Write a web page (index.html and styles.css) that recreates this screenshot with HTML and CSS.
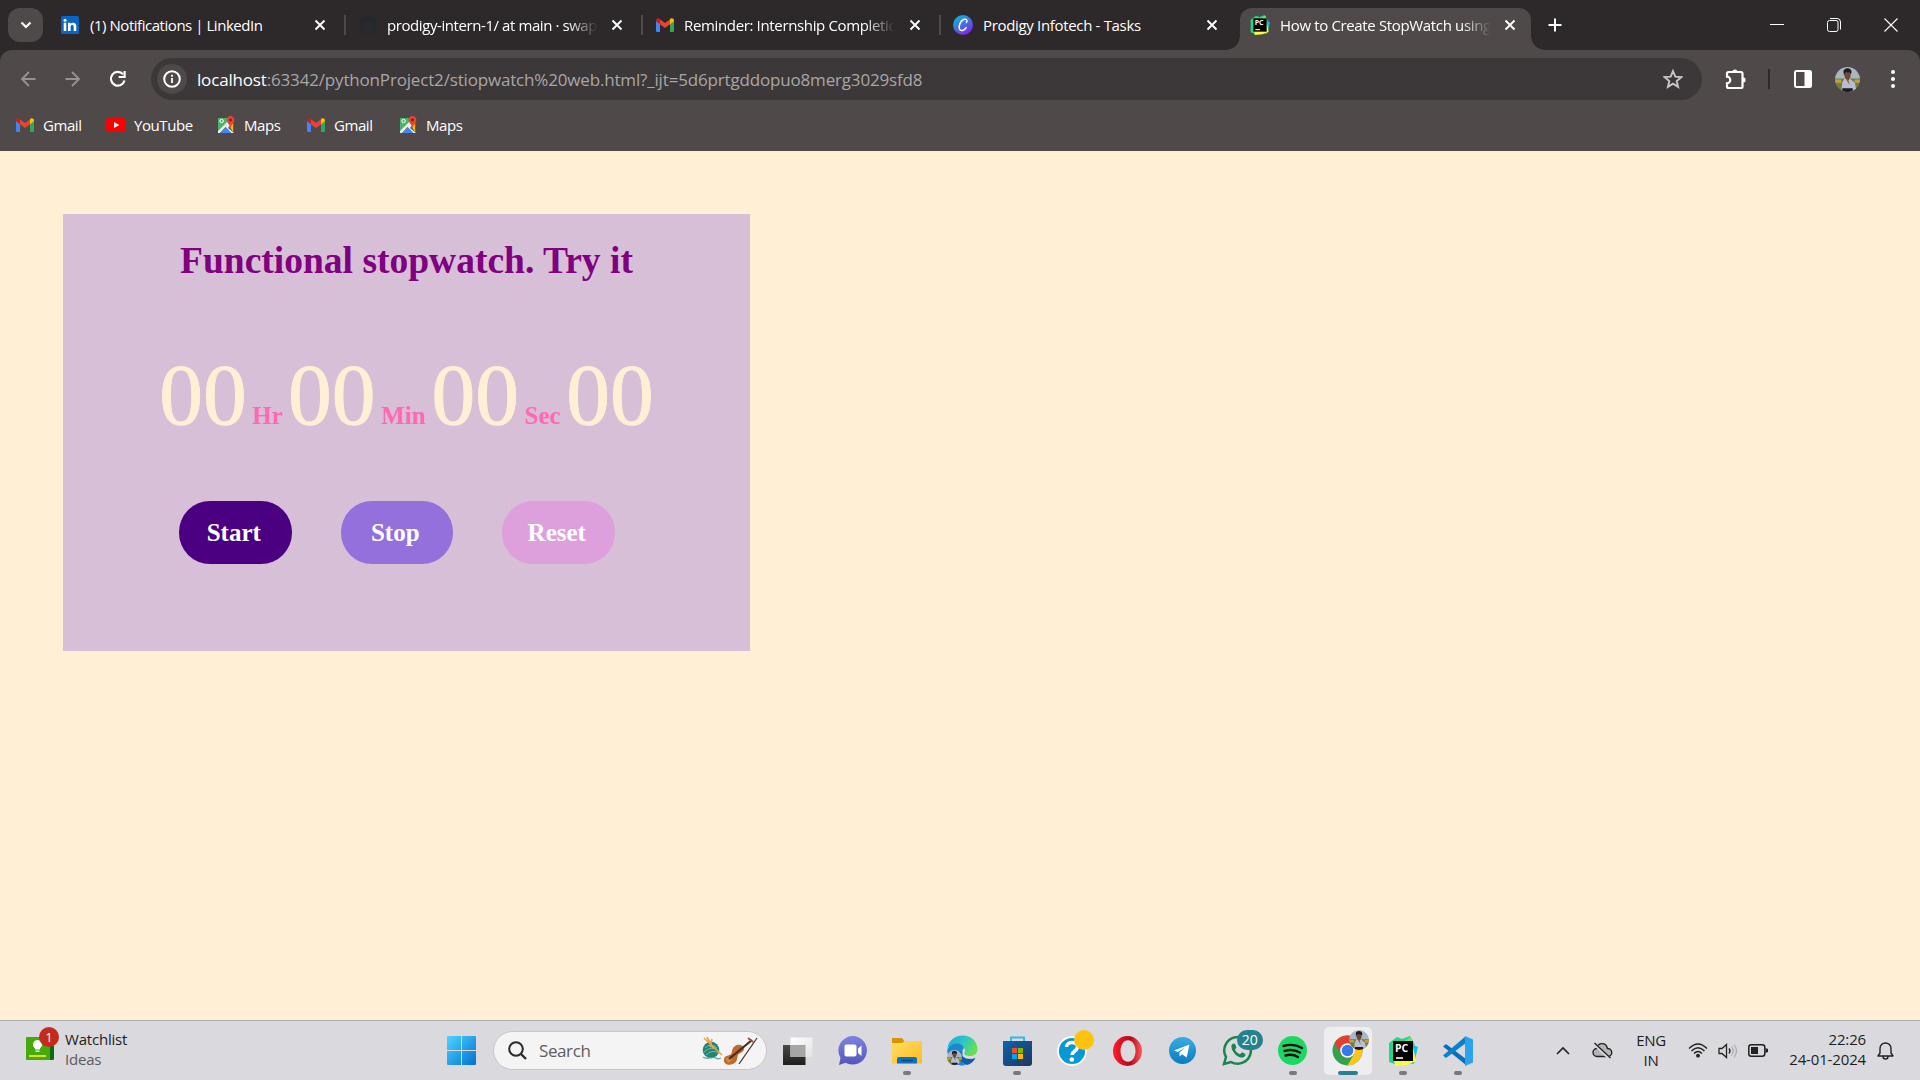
FILE: index.html
```
<!DOCTYPE html>
<html lang="en">
<head>
<meta charset="utf-8">
<title>Stopwatch</title>
<link rel="stylesheet" href="styles.css">
</head>
<body>
<svg width="0" height="0" class="defs" aria-hidden="true">
  <defs>
    <linearGradient id="win" x1="0" y1="0" x2="1" y2="1"><stop offset="0" stop-color="#4fd4ff"/><stop offset="1" stop-color="#0270d1"/></linearGradient>
    <linearGradient id="canva" x1="0" y1="0" x2=".6" y2="1"><stop offset="0" stop-color="#00c4cc"/><stop offset=".5" stop-color="#3a7be0"/><stop offset="1" stop-color="#7d2ae8"/></linearGradient>
    <linearGradient id="tg" x1="0" y1="0" x2="0" y2="1"><stop offset="0" stop-color="#37aee2"/><stop offset="1" stop-color="#0a7cc0"/></linearGradient>
    <linearGradient id="chat" x1="0" y1="0" x2="0" y2="1"><stop offset="0" stop-color="#7b83e0"/><stop offset="1" stop-color="#5555bd"/></linearGradient>
    <linearGradient id="fold" x1="0" y1="0" x2="1" y2="1"><stop offset="0" stop-color="#ffdc63"/><stop offset="1" stop-color="#fbbd22"/></linearGradient>
    <linearGradient id="store" x1="0" y1="0" x2="1" y2="1"><stop offset="0" stop-color="#0d63ad"/><stop offset="1" stop-color="#21365c"/></linearGradient>
    <linearGradient id="edgeA" x1="0" y1="0" x2="1" y2=".5"><stop offset="0" stop-color="#1aa5df"/><stop offset=".55" stop-color="#2cc7c5"/><stop offset="1" stop-color="#65e04e"/></linearGradient>
    <linearGradient id="opera" x1="0" y1="0" x2="1" y2="0"><stop offset="0" stop-color="#ff1b2d"/><stop offset=".6" stop-color="#b5071a"/><stop offset="1" stop-color="#ff5a55"/></linearGradient>
    <linearGradient id="tv" x1="0" y1="0" x2="1" y2="1"><stop offset="0" stop-color="#ffffff"/><stop offset="1" stop-color="#e2e2e2"/></linearGradient>
    <linearGradient id="tvb" x1="0" y1="0" x2="0" y2="1"><stop offset="0" stop-color="#4a4a48"/><stop offset="1" stop-color="#1d1d1d"/></linearGradient>
    <symbol id="gmail" viewBox="0 0 18 14" preserveAspectRatio="none"><path fill="#4285f4" d="M0 3v9.700A1.300 1.300 0 0 0 1.300 14H4V5z"/><path fill="#34a853" d="M14 14h2.700a1.300 1.300 0 0 0 1.300-1.300V3l-4 2z"/><path fill="#ea4335" d="M3.500.900 9 5l5.500-4.100V5.900L9 10 3.500 5.900z"/><path fill="#c5221f" d="M0 2.200C0 .4 2-.3 3.300.6L4 1.200V6.200L0 3.300z"/><path fill="#fbbc04" d="M18 2.200C18 .4 16-.3 14.700.6l-.7.600v5l4-2.900z"/></symbol>
    <symbol id="maps" viewBox="0 0 18 18"><path fill="#34a853" d="M1 2h12l-5 7-7 7z"/><path fill="#fff" d="M1 2h16v14H1z" opacity=".12"/><path fill="#fbbc04" d="m11 7 5 1v8z"/><path fill="#eceff1" d="M1 17V15L12 4l2 4-3 4 6 5h-3L8.500 11 3 17z"/><path fill="#4285f4" d="m3 17 6-5.500L14.500 17z"/><circle cx="4.600" cy="5" r="1.700" fill="none" stroke="#fff"/><path fill="#ea4335" d="M13.500 0a3.900 3.900 0 0 1 3.900 4c0 3-3.200 4-3.900 8-.7-4-3.900-5-3.900-8a3.900 3.900 0 0 1 3.900-4z"/><circle cx="13.500" cy="4" r="1.400" fill="#801e16"/></symbol>
    <symbol id="close" viewBox="0 0 12 12"><path d="m1.500 1.500 9 9m0-9-9 9" fill="none" stroke="#fff" stroke-width="1.900"/></symbol>
    <symbol id="pycharm" viewBox="0 0 30 30"><path fill="#21d789" d="m1 7 8-6 5 2 8-3 4 7 3 8-3 13-9-1-8 2-8-3z"/><path fill="#07c3f2" d="m22 8 8 3-3 9-6-3z"/><path fill="#fcf84a" d="m6 23 19-12 3 14-9 4-12 1z"/><path fill="#7be35f" d="m17 5 6-4 3 8z"/><path d="M5 5h20v20H5z"/><path stroke="#fff" stroke-width="1.600" d="M8 22h7"/><text x="7" y="15.500" font-family="Open Sans,sans-serif" font-weight="700" font-size="10.500" fill="#fff">PC</text></symbol>
    <symbol id="photo" viewBox="0 0 24 24"><clipPath id="pc"><circle cx="12" cy="12" r="12"/></clipPath><g clip-path="url(#pc)"><path fill="#a9b7c4" d="M0 0h24v12H0z"/><path fill="#787c3f" d="M0 11h24v13H0z"/><path fill="#b7a33f" d="M0 12h6v3H0zM19 12h5v3h-5z"/><path fill="#b9bdd2" d="M9 11h5l5 4 2 9H6l1-9z"/><path fill="#6b4939" d="M9 3h6v6l-2 4-3-2-1.500-4z"/><path fill="#1d1b20" d="M8 5c0-5 8-5 8 0l-1 2-1-2h-4L9 7zM7 20.500h10V24H7z"/><path fill="#80533c" d="m10 11 3 2 1 4z"/></g></symbol>
  </defs>
</svg>

<header class="browser">
  <div class="tabs">
    <div class="tab-search"><svg width="12" height="8" viewBox="0 0 12 8"><path d="m1.500 1.500 4.500 4.500 4.500-4.500" fill="none" stroke="#fff" stroke-width="2.200"/></svg></div>
    <div class="tab tab-1">
      <svg class="fav" width="18" height="18" viewBox="0 0 18 18"><rect width="18" height="18" rx="1.500" fill="#0a66c2"/><path fill="#fff" d="M2.700 6.800h2.600V15H2.700zM7 6.800h2.500V8c1-2 5.800-2.100 5.800 2V15h-2.600v-4.300c0-2.400-3.100-2.200-3.100 0V15H7z"/><circle cx="4" cy="4.200" r="1.500" fill="#fff"/></svg>
      <span class="tab-title t1">(1) Notifications | LinkedIn</span><svg class="x" width="12" height="12"><use href="#close"/></svg>
    </div>
    <div class="tab tab-2">
      <svg class="fav" width="20" height="20" viewBox="0 0 20 20"><circle cx="10" cy="10" r="9.500" fill="#24292f"/><path fill="#2d2829" d="M5 5.500 7.500 6.500h5L15 5.500c1.500 3 1 7-3 8v4.500H8V13.500c-4-1-4.500-5-3-8z"/></svg>
      <span class="tab-title t2 fade">prodigy-intern-1/ at main · swap</span><svg class="x" width="12" height="12"><use href="#close"/></svg>
    </div>
    <div class="tab tab-3">
      <svg class="fav" width="18" height="14"><use href="#gmail"/></svg>
      <span class="tab-title t3 fade">Reminder: Internship Completio</span><svg class="x" width="12" height="12"><use href="#close"/></svg>
    </div>
    <div class="tab tab-4">
      <svg class="fav" width="20" height="20" viewBox="0 0 20 20"><circle cx="10" cy="10" r="10" fill="url(#canva)"/><path d="M13.400 7.500c1.700-2.500-.3-4-2.800-3C7 6 5.500 11.500 6.500 14c1.200 2.600 5 1.600 6.700-1.400" fill="none" stroke="#fff" stroke-width="1.500" stroke-linecap="round"/></svg>
      <span class="tab-title t4">Prodigy Infotech - Tasks</span><svg class="x" width="12" height="12"><use href="#close"/></svg>
    </div>
    <div class="tab tab-5 active">
      <svg class="fav" width="20" height="20"><use href="#pycharm"/></svg>
      <span class="tab-title t5 fade">How to Create StopWatch using</span><svg class="x" width="12" height="12"><use href="#close"/></svg>
    </div>
    <svg class="plus" width="14" height="14" viewBox="0 0 14 14"><path d="M7 .5v13M.5 7h13" stroke="#fff" stroke-width="2"/></svg>
    <div class="window-controls">
      <svg width="14" height="14" viewBox="0 0 14 14"><path d="M0 6.500h14" stroke="#fff"/></svg>
      <svg width="14" height="14" viewBox="0 0 14 14"><rect x=".5" y="2.500" width="10.500" height="11" rx="2" fill="none" stroke="#fff"/><path d="M3 .5h7a3.500 3.500 0 0 1 3.500 3.500v7.500" fill="none" stroke="#fff"/></svg>
      <svg width="14" height="14" viewBox="0 0 14 14"><path d="m.5.500 13 13m0-13-13 13" stroke="#fff" stroke-width="1.100"/></svg>
    </div>
  </div>

  <div class="toolbar">
    <svg class="nav-back" width="16" height="16" viewBox="0 0 16 16"><path d="M15.500 8H2m7-7L2 8l7 7" fill="none" stroke="#969292" stroke-width="1.900"/></svg>
    <svg class="nav-fwd" width="16" height="16" viewBox="0 0 16 16"><path d="M.5 8H14M7 1l7 7-7 7" fill="none" stroke="#969292" stroke-width="1.900"/></svg>
    <svg class="reload" width="18" height="18" viewBox="0 0 18 18"><path d="M14 4.200A6.900 6.900 0 1 0 15.500 10.500" fill="none" stroke="#fff" stroke-width="2.200"/><path d="M15.600 1v6h-6" fill="none" stroke="#fff" stroke-width="2.200"/></svg>
    <div class="omnibox">
      <div class="site-info"><svg width="18" height="18" viewBox="0 0 18 18"><circle cx="9" cy="9" r="7.800" fill="none" stroke="#fff" stroke-width="2"/><path d="M9 8v5M9 4.800v2" stroke="#fff" stroke-width="1.800"/></svg></div>
      <span class="url"><b>localhost</b>:63342/pythonProject2/stiopwatch%20web.html?_ijt=5d6prtgddopuo8merg3029sfd8</span>
      <svg class="star" width="20" height="20" viewBox="0 0 20 20"><path d="m10 2 2.300 5.600 6 .5-4.600 3.900 1.400 5.900-5.100-3.200-5.100 3.200L6.300 12 1.700 8.100l6-.5z" fill="none" stroke="#c7c5c5" stroke-width="1.900"/></svg>
    </div>
    <svg class="ext" width="22" height="22" viewBox="0 0 22 22"><path d="M2 5.500q0-1.500 1.500-1.500H16q1.500 0 1.500 1.500V18.500q0 1.500-1.500 1.500H3.500Q2 20 2 18.500V15.300a3.300 3.300 0 0 0 0-6.600z" fill="none" stroke="#fff" stroke-width="2.200"/><path d="M7.300 4a2.600 2.600 0 0 1 5.200 0zM18 9.300a2.600 2.600 0 0 1 0 5.200z" fill="#fff"/></svg>
    <span class="divider"></span>
    <svg class="panel" width="18" height="18" viewBox="0 0 18 18"><rect x="1" y="1" width="16" height="16" rx="1.500" fill="none" stroke="#fff" stroke-width="2"/><path d="M10.500 1H17v16h-6.500z" fill="#fff"/></svg>
    <svg class="avatar" width="25" height="25"><use href="#photo"/></svg>
    <svg class="dots" width="4" height="18" viewBox="0 0 4 18"><g fill="#fff"><circle cx="2" cy="2" r="2"/><circle cx="2" cy="9" r="2"/><circle cx="2" cy="16" r="2"/></g></svg>
  </div>

  <div class="bookmarks">
    <div class="bm bm-1"><svg width="18" height="14"><use href="#gmail"/></svg><span>Gmail</span></div>
    <div class="bm bm-2"><svg width="20" height="14" viewBox="0 0 20 14"><rect width="20" height="14" rx="3.500" fill="#f00"/><path fill="#fff" d="m8 4 5.300 3L8 10z"/></svg><span>YouTube</span></div>
    <div class="bm bm-3"><svg width="18" height="18"><use href="#maps"/></svg><span>Maps</span></div>
    <div class="bm bm-4"><svg width="18" height="14"><use href="#gmail"/></svg><span>Gmail</span></div>
    <div class="bm bm-5"><svg width="18" height="18"><use href="#maps"/></svg><span>Maps</span></div>
  </div>
</header>

<main class="page">
  <section class="card">
    <h1 class="title">Functional stopwatch. Try it</h1>
    <div class="time"><span class="digit">00</span> <span class="unit">Hr</span> <span class="digit">00</span> <span class="unit">Min</span> <span class="digit">00</span> <span class="unit">Sec</span> <span class="digit">00</span></div>
    <div class="buttons"><button class="btn start">Start</button><button class="btn stop">Stop</button><button class="btn reset">Reset</button></div>
  </section>
</main>

<footer class="taskbar">
  <div class="widget">
    <div class="widget-icon"><svg width="28" height="23" viewBox="0 0 28 23"><rect width="28" height="23" rx="1.500" fill="#0b6a18"/><path fill="#48a90d" d="M1.500 0H24v23H1.500A1.500 1.500 0 0 1 0 21.500v-20A1.500 1.500 0 0 1 1.500 0z"/><path fill="#d5e800" d="M3 18h17v2H3z"/><path fill="#fff" d="M11.500 3a4.500 4.500 0 0 1 2.800 8l-.5 1.500H9.300L8.700 11a4.500 4.500 0 0 1 2.800-8zM9.500 13.500h4v1.300h-4z"/></svg><span class="badge-one">1</span></div>
    <div class="widget-text"><span>Watchlist</span><span class="sub">Ideas</span></div>
  </div>
  <svg class="winlogo" width="29" height="29" viewBox="0 0 29 29"><path fill="url(#win)" d="M1 0h13v14H0V1a1 1 0 0 1 1-1zM15 0h13a1 1 0 0 1 1 1v13H15zM0 15h14v14H1a1 1 0 0 1-1-1zM15 15h14v13a1 1 0 0 1-1 1H15z"/></svg>
  <div class="search">
    <svg width="19" height="19" viewBox="0 0 19 19"><circle cx="8" cy="8" r="6.800" fill="none" stroke="#2a2a2a" stroke-width="2"/><path d="m13 13 5 5" stroke="#2a2a2a" stroke-width="2.400"/></svg>
    <span>Search</span>
    <svg class="doodle" width="56" height="28" viewBox="0 0 56 28"><circle cx="9" cy="13" r="8.300" fill="#278475"/><path stroke="#65bfa9" fill="none" d="M3 11q6-6 12 0M2 15q8-7 14-1M4 18q6-6 12-2"/><path stroke="#4fa491" stroke-width="1.200" fill="none" d="M1 20c2 3 10-1 13 1s3 0 5 0"/><path stroke="#f0a04b" stroke-width="1.700" d="m2 1 18 17M5 0l6 11M10 2 8 10"/><path fill="#bd6a2e" d="M22 22c1-4 5-3 7-5s0-5 4-8 9 0 9 3-5 4-6 6 0 7-5 9c-5 2-10 0-9-5z"/><path fill="#d98a48" d="M24 22c1-2 4-2 5-1l1 2-4 3z"/><path stroke="#4b2b20" stroke-width="2.200" d="M27 22 50 3"/><path stroke="#9c4a35" stroke-width="1.800" d="m46 1 5 4"/><path stroke="#4b3430" stroke-width="1.300" d="M37 27 55 1"/></svg>
  </div>
  <div class="apps">
    <div class="app"><svg width="31" height="30" viewBox="0 0 31 30"><path fill="url(#tvb)" d="M1 9h22.500v20H1z"/><path fill="url(#tv)" d="M8.500 1.500h22V21h-22z"/><path fill="#a6a6a5" d="M8.500 9h15v12h-15z"/></svg></div>
    <div class="app"><svg width="29" height="29" viewBox="0 0 29 29"><path fill="url(#chat)" d="M14.500 0a14.300 14.300 0 1 1-7 26.700L1 29l1.500-7A14.500 14.500 0 0 1 14.500 0z"/><rect x="6.500" y="8.500" width="12" height="12" rx="2" fill="#fff"/><path fill="#fff" d="m20 12.500 3.500-3v10.500l-3.500-3z"/></svg></div>
    <div class="app run"><svg width="30" height="28" viewBox="0 0 30 28"><path fill="#d89405" d="M0 1h10l3 4v5H0z"/><path fill="url(#fold)" d="M0 6h10l3-2h17v22.500H0z"/><path fill="#0b72c3" d="M7 20h16a2 2 0 0 1 2 2v4.500H5V22a2 2 0 0 1 2-2z"/><path stroke="#064b87" stroke-width="1.500" d="M9 23.500h12"/></svg></div>
    <div class="app"><svg width="31" height="31" viewBox="0 0 31 31"><path fill="#1b87cf" d="M.5 15.500A15 15 0 0 0 15.500 30.500V14z"/><path fill="url(#edgeA)" d="M.5 13C3-3 28-4 30.500 13c.5 6-4 8-8 8-5 0-6.500-2.500-4.500-4.500C19 12 10 6 .5 13z"/><path fill="#1c86ce" d="M.5 14C5 7 15 7 17 13c-5 5-5 14 2 17A15 15 0 0 1 .5 14z"/><path fill="#135da8" d="M14 16c-4 5 0 13 6 14 4-1 7-4 8.500-7-8 3-15-1-14.500-7z"/><svg x="0" y="15" width="15" height="15"><use href="#photo"/></svg></svg></div>
    <div class="app run"><svg width="29" height="30" viewBox="0 0 29 30"><path d="M8 6V1.500h13V6" fill="none" stroke="#31b9e9" stroke-width="2"/><path fill="url(#store)" d="M0 5h29v22q0 3-3 3H3q-3 0-3-3z"/><path fill="#f25022" d="M9 12h5v5H9z"/><path fill="#7fba00" d="M15 12h5v5h-5z"/><path fill="#00a4ef" d="M9 18h5v5H9z"/><path fill="#ffb900" d="M15 18h5v5h-5z"/></svg></div>
    <div class="app"><svg width="30" height="30" viewBox="0 0 30 30"><circle cx="15" cy="15" r="14" fill="#0898d8" stroke="#fff" stroke-width="1.800"/><path d="M9.500 11c0-6 11-6 11 0 0 4-5.500 4-5.500 8" fill="none" stroke="#fff" stroke-width="3.500"/><circle cx="14.800" cy="23.500" r="2.300" fill="#fff"/></svg><span class="dot-badge"></span></div>
    <div class="app"><svg width="29" height="30" viewBox="0 0 29 30"><path fill="url(#opera)" fill-rule="evenodd" d="M14.500 0a14.500 15 0 1 1 0 30 14.500 15 0 0 1 0-30zM15 4.200c-4.400 0-7.500 4.800-7.500 10.800s3.100 10.800 7.500 10.800 7.500-4.800 7.500-10.800S19.400 4.200 15 4.200z"/></svg></div>
    <div class="app"><svg width="27" height="27" viewBox="0 0 27 27"><circle cx="13.500" cy="13.500" r="13.500" fill="url(#tg)"/><path fill="#fff" d="m5 13.500 15.500-6-2.800 13-4.700-3.300-2.300 2.300-.3-3.700 6-5.500-7.400 4.700z"/></svg></div>
    <div class="app"><svg width="31" height="31" viewBox="0 0 31 31"><path d="m2 29 2-7A13.300 13.300 0 1 1 9 27z" fill="none" stroke="#1b8550" stroke-width="2.500"/><path fill="#1b8550" d="M11 8.500c-5 3 3 15 9.500 14 3-.5 3.500-3 2.500-3.700l-3-1.500-2 2c-2-.6-4-2.500-5-4.800l1.500-2L13 9z"/></svg><span class="count">20</span></div>
    <div class="app run"><svg width="29" height="29" viewBox="0 0 29 29"><circle cx="14.500" cy="14.500" r="14.500" fill="#1ed760"/><path d="M5.500 10q10-3 18.500 2M6.500 15q8-2.500 15.500 1.500M7.500 19.500q7-2 12.500 1.500" fill="none" stroke="#111" stroke-width="2.400" stroke-linecap="round"/></svg></div>
    <div class="app current"><svg width="31" height="31" viewBox="0 0 31 31"><circle cx="15.500" cy="15.500" r="15" fill="#33a14d"/><path fill="#e43e30" d="M2.500 8A15 15 0 0 1 28.500 8H15.500L9 19z"/><path fill="#fdc51a" d="M28.500 8a15 15 0 0 1-13 22.500L22 19l-2-11z"/><circle cx="15.500" cy="15.500" r="7.300" fill="#fff"/><circle cx="15.500" cy="15.500" r="5.800" fill="#3579ec"/></svg><svg class="mini" width="20" height="20"><use href="#photo"/></svg></div>
    <div class="app run"><svg width="30" height="30"><use href="#pycharm"/></svg></div>
    <div class="app run"><svg width="30" height="30" viewBox="0 0 30 30"><path fill="#0a6fb8" d="M0 10.500 3 8l20 15v6z"/><path fill="#0b80cc" d="m0 19.500 3 2.500L23 7V0z"/><path fill="#2ba2ee" d="M22 0l8 3.500v23L22 30z"/></svg></div>
  </div>
  <div class="tray">
    <svg class="chev" width="14" height="9" viewBox="0 0 14 9"><path d="m1 8 6-6 6 6" fill="none" stroke="#222" stroke-width="1.600"/></svg>
    <svg class="cloud" width="21" height="17" viewBox="0 0 21 17"><path d="M5 14.500a4 4 0 0 1 0-8C6 0 14 0 15.500 6.500a4 4 0 0 1 .5 8z" fill="#b5b5b8" stroke="#222" stroke-width="1.400"/><path d="m3 2.500 14.500 14" stroke="#d9d9de" stroke-width="3.200"/><path d="m2.500 1 16 15" stroke="#222" stroke-width="1.400"/></svg>
    <div class="lang"><span>ENG</span><span>IN</span></div>
    <svg class="wifi" width="20" height="15" viewBox="0 0 20 15"><path d="M1 5.500q9-9 18 0M3.500 8q6.500-6.500 13 0M6 10.500q4-4 8 0" fill="none" stroke="#222" stroke-width="1.400"/><circle cx="10" cy="12.700" r="1.900" fill="#222"/></svg>
    <svg class="vol" width="20" height="16" viewBox="0 0 20 16"><path d="M1 5.500h3l4.500-4v13L4 10.500H1z" fill="none" stroke="#222" stroke-width="1.300"/><path d="M11 5.500q2 2.500 0 5" fill="none" stroke="#222" stroke-width="1.300"/><path d="M13.500 3.500q3.500 4.500 0 9M16 1.500q5 6.500 0 13" fill="none" stroke="#aaa" stroke-width="1.200"/></svg>
    <svg class="bat" width="20" height="13" viewBox="0 0 20 13"><rect x=".8" y=".8" width="16" height="11.400" rx="2.500" fill="none" stroke="#222" stroke-width="1.500"/><path fill="#222" d="M3 3h7v7H3zM17.500 4 20 5v3l-2.500 1z"/></svg>
    <div class="clock"><span>22:26</span><span class="date">24-01-2024</span></div>
    <svg class="bell" width="17" height="18" viewBox="0 0 17 18"><path d="M1 14 3 11V6.500a5.500 5.500 0 0 1 11 0V11l2 3zM6 14.500a2.500 2.500 0 0 0 5 0" fill="none" stroke="#222" stroke-width="1.400" stroke-linejoin="round"/></svg>
  </div>
</footer>
</body>
</html>
```
FILE: styles.css
```
* { box-sizing: border-box; }
html, body { margin: 0; height: 100%; }
body { display: flex; flex-direction: column; width: 1920px; height: 1080px; overflow: hidden; background: #ffefd5; font-family: "Open Sans", "Noto Sans", sans-serif; }
svg { display: block; flex: none; }
.defs { position: absolute; }

/* Browser chrome */
.browser { flex: none; height: 151px; background: #2d2829; color: #fff; }
.tabs { display: flex; align-items: center; height: 50px; }
.tab-search { display: flex; align-items: center; justify-content: center; width: 35px; height: 34px; margin-left: 8px; border-radius: 12px; background: #4f4949; }
.tab { position: relative; display: flex; align-items: center; height: 42px; width: 297.300px; margin-top: 8px; padding-bottom: 8px; }
.tab-1 { padding-left: 18px; width: 301px; }
.tab-2 { padding-left: 14px; width: 297px; }
.tab-3 { padding-left: 15px; width: 298px; }
.tab-4 { padding-left: 14px; width: 301px; }
.tab-5 { padding-left: 10px; width: 291px; }
.tab-2::before, .tab-3::before, .tab-4::before { content: ""; position: absolute; left: 0; top: 7px; width: 2px; height: 20px; background: #4f4949; }
.active { background: #4f4949; border-radius: 12px 12px 0 0; }
.active::before, .active::after { content: ""; position: absolute; bottom: 0; width: 14px; height: 14px; }
.active::before { left: -14px; background: radial-gradient(circle at 0 0, transparent 13.500px, #4f4949 14px); }
.active::after { right: -14px; background: radial-gradient(circle at 100% 0, transparent 13.500px, #4f4949 14px); }
.tab-title { margin-left: 10px; width: 213px; overflow: hidden; white-space: nowrap; font-size: 15px; line-height: 24px; letter-spacing: -.35px; }
.t1 { margin-left: 11px; letter-spacing: -.46px; }
.t2 { margin-left: 9px; letter-spacing: -.42px; }
.t4 { letter-spacing: -.33px; }
.fade { -webkit-mask-image: linear-gradient(90deg, #000 85%, transparent 99%); mask-image: linear-gradient(90deg, #000 85%, transparent 99%); }
.x { margin-left: 11px; }
.tab-3 .x { margin-left: 12px; }
.tab-4 .x { margin-left: 10px; }
.plus { margin-left: 17px; }
.window-controls { display: flex; gap: 43px; margin-left: auto; padding-right: 22px; }
.toolbar { display: flex; align-items: center; height: 58px; padding-left: 20px; border-radius: 12px 12px 0 0; background: #4f4949; }
.nav-fwd { margin-left: 29px; }
.reload { margin-left: 28px; }
.omnibox { display: flex; align-items: center; width: 1551px; height: 42px; margin-left: 24px; padding: 0 19px 0 6px; border-radius: 21px; background: #3c3839; }
.site-info { display: flex; align-items: center; justify-content: center; width: 30px; height: 30px; border-radius: 50%; background: #4f4949; }
.url { margin-left: 10px; white-space: nowrap; color: #a9a6a6; font-size: 17px; letter-spacing: -.17px; }
.url b { color: #fff; font-weight: 400; }
.star { margin-left: auto; }
.ext { margin-left: 23px; }
.divider { width: 1.500px; height: 20px; margin-left: 21px; background: #2d2829; }
.panel { margin-left: 24px; }
.avatar { margin-left: 23px; }
.dots { margin-left: 31px; }
.bookmarks { display: flex; align-items: center; height: 43px; padding: 0 0 9px 16px; background: #4f4949; font-size: 15px; letter-spacing: -.42px; }
.bm { display: flex; align-items: center; gap: 9px; }
.bm-1 { width: 90px; }
.bm-2 { width: 111px; gap: 8px; }
.bm-3 { width: 90px; }
.bm-4 { width: 92px; }

/* Stopwatch page */
.page { flex: 1; padding: 63px; font-family: "Liberation Serif", serif; }
.card { display: flex; flex-direction: column; align-items: center; width: 687px; height: 437px; background: #d8bfd8; }
.title { margin: 25px 0 0; font-size: 37.500px; line-height: 44px; color: #800080; white-space: nowrap; }
.time { margin-top: 62px; height: 100px; line-height: 100px; white-space: nowrap; font-size: 25px; font-weight: 700; word-spacing: -.6px; }
.digit { font-size: 87.500px; font-weight: 400; color: #ffefd5; -webkit-text-stroke: .9px #ffefd5; }
.unit { color: #ff69b4; }
.buttons { display: flex; gap: 49px; width: 455px; margin-top: 56px; }
.btn { width: 112.500px; height: 63px; padding: 0 3px 0 0; border: 0; border-radius: 31px; color: #fff; font: 700 25px "Liberation Serif", serif; }
.start { background: #4b0082; }
.stop { background: #9370db; }
.reset { background: #dda0dd; }

/* Taskbar */
.taskbar { position: relative; display: flex; align-items: center; flex: none; height: 60px; border-top: 1px solid #adabb2; background: #d9d9de; color: #1e1e1e; }
.widget { display: flex; width: 421px; padding-left: 26px; }
.widget-icon { position: relative; width: 39px; padding-top: 8px; }
.badge-one { position: absolute; left: 13px; top: -2px; width: 20px; height: 20px; border-radius: 50%; background: #c42b1c; color: #fff; font-size: 13px; line-height: 20px; text-align: center; }
.widget-text { display: flex; flex-direction: column; padding-bottom: 3px; font-size: 15px; line-height: 20px; letter-spacing: -.2px; }
.sub { color: #5b5b5e; }
.winlogo { margin: 0 0 0 26px; }
.search { display: flex; align-items: center; width: 274px; height: 39px; margin-left: 17px; padding: 0 8px 0 14px; border: 1px solid #c5c5ca; border-radius: 20px; background: #f4f4f5; color: #5e5e60; font-size: 17px; }
.search span { margin-left: 12px; letter-spacing: -.4px; }
.doodle { margin-left: auto; }
.apps { display: flex; margin-left: 6px; }
.app { position: relative; display: flex; align-items: center; justify-content: center; width: 48px; height: 48px; border-radius: 5px; margin-right: 7.100px; }
.run::after, .current::after { content: ""; position: absolute; left: 20px; bottom: 0; width: 8px; height: 4px; border-radius: 2px; background: #79797c; }
.current { background: #eeeef1; }
.current::after { left: 14px; width: 20px; background: #24818e; }
.dot-badge { position: absolute; right: 2px; top: 3px; width: 20px; height: 20px; border-radius: 50%; background: #ffc20e; }
.count { position: absolute; right: -1px; top: 3px; width: 26px; height: 20px; border-radius: 10px; background: #24818e; color: #fff; font-size: 14px; line-height: 20px; text-align: center; }
.mini { position: absolute; right: 3px; top: 3px; }
.tray { position: relative; display: flex; align-items: center; margin-left: auto; padding-right: 26px; font-size: 15px; line-height: 20px; letter-spacing: -.3px; }
.cloud { margin-left: 22px; }
.lang { display: flex; flex-direction: column; align-items: center; width: 30px; margin-left: 23px; padding-bottom: 2px; }
.wifi { margin-left: 22px; }
.vol { margin-left: 10px; }
.bat { margin-left: 10px; }
.clock { display: flex; flex-direction: column; align-items: flex-end; width: 78px; margin-left: 20px; padding-bottom: 3px; white-space: nowrap; letter-spacing: -.15px; }
.bell { margin-left: 11px; }
```
